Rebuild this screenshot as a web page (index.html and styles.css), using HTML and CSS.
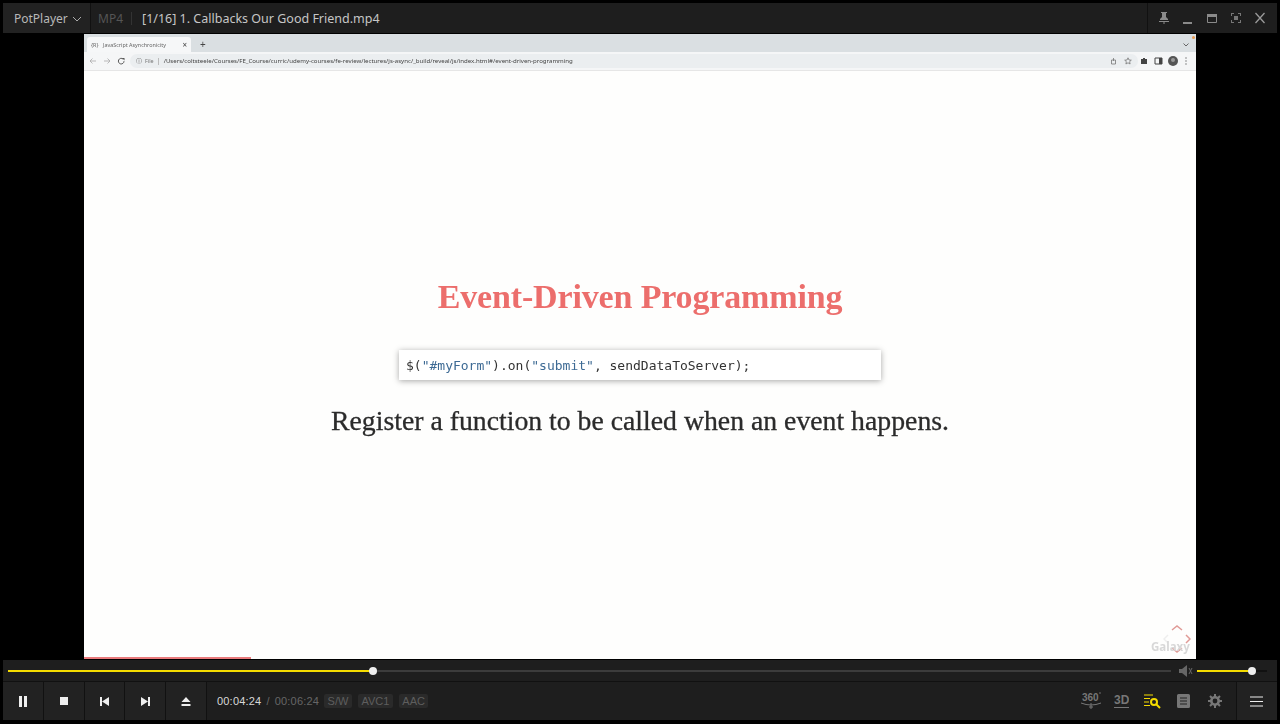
FILE: index.html
```html
<!DOCTYPE html>
<html lang="en">
<head>
    <meta charset="UTF-8">
    <title>PotPlayer</title>
    <link rel="stylesheet" href="styles.css">
</head>
<body>
    <div class="player">
        <div class="titlebar">
            <div class="app-menu">PotPlayer
                <svg class="chevron" width="10" height="6" viewBox="0 0 10 6"><path d="M1 1l4 4 4-4" fill="none" stroke="#aaa" stroke-width="1"/></svg>
            </div>
            <div class="title-info">
                <span class="format">MP4</span>
                <span class="title-sep"></span>
                <span class="filename">[1/16] 1. Callbacks Our Good Friend.mp4</span>
            </div>
            <div class="window-buttons">
                <svg width="12" height="14" viewBox="0 0 12 14"><path d="M3 1h6v1H8v4l2 2v1H2V8l2-2V2H3zM1 10h10v1H1zM5.500 11h1v2h-1z" fill="#8a8a8a"/></svg>
                <svg width="12" height="14" viewBox="0 0 12 14"><path d="M1 11h9v2H1z" fill="#8a8a8a"/></svg>
                <svg width="12" height="14" viewBox="0 0 12 14"><path d="M1.500 3.500h9v8h-9z" fill="none" stroke="#8a8a8a"/><path d="M1 3h10v3H1z" fill="#8a8a8a"/></svg>
                <svg width="12" height="14" viewBox="0 0 12 14"><path d="M1 2h3v1H2v2H1zM8 2h3v3h-1V3H8zM1 9h1v2h2v1H1zM10 9h1v3H8v-1h2zM4 5h4v4H4z" fill="#777"/></svg>
                <svg width="12" height="14" viewBox="0 0 12 14"><path d="M1.500 2l9 10M10.500 2l-9 10" fill="none" stroke="#9a9a9a" stroke-width="1.300"/></svg>
            </div>
        </div>

        <div class="video-area">
            <div class="video">
                <div class="chrome-tabs">
                    <div class="chrome-tab">
                        <span class="favicon">{R}</span>
                        <span class="tab-title">JavaScript Asynchronicity</span>
                        <span class="tab-close">×</span>
                    </div>
                    <span class="tab-new">+</span>
                    <svg class="tab-more" width="6" height="4" viewBox="0 0 6 4"><path d="M0.500 0.500L3 3l2.500-2.500" fill="none" stroke="#666"/></svg>
                    <span class="update-dot"></span>
                </div>
                <div class="chrome-bar">
                    <svg width="39" height="8" viewBox="0 0 39 8"><path d="M1 4h6M1 4l2.500-2.500M1 4l2.500 2.500M15 4h6M21 4l-2.500-2.500M21 4l-2.500 2.500" fill="none" stroke="#aaa" stroke-width="0.800"/><path d="M34 2a2.800 2.800 0 1 0 1 2.200" fill="none" stroke="#555" stroke-width="1"/><path d="M33 1h2.500v2.500z" fill="#555"/></svg>
                    <div class="omnibox">
                        <span class="info-icon">ⓘ</span>
                        <span class="file-label">File</span>
                        <span class="url-sep"></span>
                        <span class="url">/Users/coltsteele/Courses/FE_Course/curric/udemy-courses/fe-review/lectures/js-async/_build/reveal/js/index.html#/event-driven-programming</span>
                        <svg class="omni-icons" width="24" height="8" viewBox="0 0 24 8"><path d="M1.500 3h4v4h-4zM3.500 1v3" fill="none" stroke="#777" stroke-width="0.800"/><path d="M18 0.800l1 2.200 2.300 0.200-1.700 1.500 0.500 2.300-2.100-1.200-2.100 1.200 0.500-2.300-1.700-1.500 2.300-0.200z" fill="none" stroke="#777" stroke-width="0.800"/></svg>
                    </div>
                    <svg width="52" height="10" viewBox="0 0 52 10"><path d="M1 3h2V2h2v1h2v5H1z" fill="#444"/><path d="M15 2h7v6h-7z" fill="none" stroke="#444"/><path d="M19 2h3v6h-3z" fill="#444"/><circle cx="33" cy="5" r="5" fill="#555"/><circle cx="33" cy="4" r="2" fill="#999"/><circle cx="46" cy="2" r="0.700" fill="#666"/><circle cx="46" cy="5" r="0.700" fill="#666"/><circle cx="46" cy="8" r="0.700" fill="#666"/></svg>
                </div>
                <div class="slide">
                    <h1 class="slide-title">Event-Driven Programming</h1>
                    <pre class="code-box">$(<span class="code-str">"#myForm"</span>).on(<span class="code-str">"submit"</span>, sendDataToServer);</pre>
                    <p class="slide-text">Register a function to be called when an event happens.</p>
                    <div class="watermark">
                        <svg width="28" height="28" viewBox="0 0 28 28"><path d="M9 5l5-4 5 4M23 10l4 4-4 4M19 23l-5 4-5-4" fill="none" stroke="#e09a96" stroke-width="1.500"/><path d="M5 10l-4 4 4 4" fill="none" stroke="#eee" stroke-width="1.500"/></svg>
                        <span class="watermark-text">Galaxy</span>
                    </div>
                </div>
                <div class="slide-progress"></div>
            </div>
        </div>

        <div class="seek-row">
            <div class="track seek-track">
                <div class="track-fill seek-fill"></div>
                <span class="knob"></span>
            </div>
            <svg class="speaker" width="14" height="12" viewBox="0 0 14 12"><path d="M0 4h3l5-4v12L3 8H0z" fill="#666"/><path d="M10 3l3 6M13 3l-3 6" stroke="#666" stroke-width="1"/></svg>
            <div class="track volume-track">
                <div class="track-fill volume-fill"></div>
                <span class="knob"></span>
            </div>
        </div>

        <div class="controls">
            <button class="ctl-btn"><svg width="10" height="11" viewBox="0 0 10 11"><path d="M1 0h3v11H1zM6 0h3v11H6z" fill="#eee"/></svg></button>
            <button class="ctl-btn"><svg width="8" height="8" viewBox="0 0 8 8"><path d="M0 0h8v8H0z" fill="#eee"/></svg></button>
            <button class="ctl-btn"><svg width="9" height="9" viewBox="0 0 9 9"><path d="M0 0h2v9H0zM9 0v9L2 4.500z" fill="#eee"/></svg></button>
            <button class="ctl-btn"><svg width="9" height="9" viewBox="0 0 9 9"><path d="M9 0H7v9h2zM0 0v9l7-4.500z" fill="#eee"/></svg></button>
            <button class="ctl-btn"><svg width="10" height="9" viewBox="0 0 10 9"><path d="M5 0l4.500 5H.5zM.5 7h9v2h-9z" fill="#eee"/></svg></button>
            <div class="time">
                <span class="time-now">00:04:24</span>
                <span class="time-sep">/</span>
                <span class="time-total">00:06:24</span>
            </div>
            <div class="badges">
                <span class="badge">S/W</span>
                <span class="badge">AVC1</span>
                <span class="badge">AAC</span>
            </div>
            <div class="tools">
                <span class="tool"><svg width="22" height="20" viewBox="0 0 22 20"><text x="2" y="10" class="icon-label">360</text><circle cx="20" cy="2" r="0.800" fill="#777"/><path d="M1 12q10 4 20 0M11 12v6M9 16h4" fill="none" stroke="#777"/></svg></span>
                <span class="tool"><svg width="15" height="16" viewBox="0 0 15 16"><text x="0" y="11" class="icon-label icon-label-big">3D</text><path d="M0 14.500h15" stroke="#777"/></svg></span>
                <span class="tool"><svg width="17" height="15" viewBox="0 0 17 15"><path d="M0 1h9M0 4.500h6M0 8h5M0 11.500h6" stroke="#f5dc00" stroke-width="1.200"/><circle cx="10" cy="8" r="3" fill="none" stroke="#f5dc00" stroke-width="2"/><path d="M12 10l4 4" stroke="#f5dc00" stroke-width="2"/></svg></span>
                <span class="tool"><svg width="13" height="14" viewBox="0 0 13 14"><path d="M1.500 0h10A1.500 1.500 0 0 1 13 1.500v11a1.500 1.500 0 0 1-1.500 1.500h-10A1.500 1.500 0 0 1 0 12.500v-11A1.500 1.500 0 0 1 1.500 0z" fill="#777"/><path d="M3 4h7M3 7h7M3 10h7" stroke="#222"/></svg></span>
                <span class="tool"><svg width="14" height="14" viewBox="0 0 14 14"><circle cx="7" cy="7" r="3.700" fill="none" stroke="#777" stroke-width="2.600"/><path d="M7 0v3M7 11v3M0 7h3M11 7h3M2 2l2 2M10 10l2 2M12 2l-2 2M4 10l-2 2" stroke="#777" stroke-width="2"/></svg></span>
            </div>
            <button class="ctl-btn menu-btn"><svg width="13" height="11" viewBox="0 0 13 11"><path d="M0 1h13M0 5.500h13M0 10h13" stroke="#eee" stroke-width="1.200"/></svg></button>
        </div>
    </div>
</body>
</html>
```

FILE: styles.css
```css
* {
    box-sizing: border-box;
}
body {
    margin: 0;
    background-color: #000;
    font-family: "Noto Sans", Arial, sans-serif;
}
.player {
    display: flex;
    flex-direction: column;
    height: 724px;
    padding: 3px 3px 4px;
    overflow: hidden;
}

/* title bar */
.titlebar {
    display: flex;
    align-items: center;
    height: 30px;
    background-color: #1e1e1e;
    flex-shrink: 0;
}
.app-menu {
    display: flex;
    align-items: center;
    gap: 4px;
    width: 88px;
    height: 100%;
    padding-left: 11px;
    background-color: #222;
    border-right: 1px solid #111;
    color: #b8b8b8;
    font-size: 12px;
}
.chevron {
    margin-top: 1px;
}
.title-info {
    display: flex;
    align-items: center;
    flex: 1;
    padding-left: 7px;
}
.format {
    color: #555;
    font-size: 12px;
}
.title-sep {
    width: 1px;
    height: 13px;
    margin: 0 10px 0 8px;
    background-color: #333;
}
.filename {
    color: #c6c6c6;
    font-size: 12.5px;
}
.window-buttons {
    display: flex;
    align-items: center;
    gap: 12px;
    width: 130px;
    height: 100%;
    padding-left: 10px;
    border-left: 1px solid #111;
}

/* video */
.video-area {
    display: flex;
    justify-content: center;
    flex: 1;
    min-height: 0;
    padding-top: 1px;
}
.video {
    position: relative;
    display: flex;
    flex-direction: column;
    width: 1112px;
    background-color: #fefefd;
}
.chrome-tabs {
    position: relative;
    display: flex;
    align-items: flex-end;
    height: 18px;
    padding-left: 3px;
    background-color: #dadfe2;
    flex-shrink: 0;
    filter: blur(0.4px);
}
.chrome-tab {
    display: flex;
    align-items: center;
    width: 104px;
    height: 15px;
    padding: 0 4px;
    background-color: #f6f7f8;
    border-radius: 3px 3px 0 0;
    font-size: 5.4px;
    color: #666;
}
.favicon {
    width: 12px;
}
.tab-title {
    flex: 1;
    white-space: nowrap;
}
.tab-close {
    font-size: 8px;
    color: #444;
}
.tab-new {
    margin: 0 0 1px 9px;
    font-size: 10px;
    line-height: 13px;
    color: #444;
}
.tab-more {
    position: absolute;
    right: 7px;
    top: 9px;
}
.update-dot {
    position: absolute;
    right: 1px;
    top: 2px;
    width: 3px;
    height: 3px;
    background-color: #e99a50;
    border-radius: 50%;
}
.chrome-bar {
    display: flex;
    align-items: center;
    gap: 2px;
    height: 19px;
    padding: 0 4px 0 5px;
    background-color: #f5f6f7;
    border-bottom: 1px solid #e6e6e6;
    flex-shrink: 0;
    filter: blur(0.4px);
}
.omnibox {
    display: flex;
    align-items: center;
    flex: 1;
    height: 14px;
    padding: 0 4px 0 6px;
    background-color: #ebeef0;
    border-radius: 7px;
    font-size: 5.4px;
    color: #555;
}
.info-icon {
    width: 9px;
    font-size: 6px;
}
.file-label {
    color: #777;
}
.url-sep {
    width: 1px;
    height: 7px;
    margin: 0 5px 0 4px;
    background-color: #bbb;
}
.url {
    flex: 1;
    white-space: nowrap;
    font-size: 6.08px;
    color: #444;
}

/* slide */
.slide {
    position: relative;
    display: flex;
    flex-direction: column;
    align-items: center;
    flex: 1;
    min-height: 0;
    filter: blur(0.3px);
}
.slide-title {
    margin: 204px 0 0;
    font-family: "Liberation Serif", serif;
    font-size: 34px;
    line-height: 44px;
    font-weight: bold;
    letter-spacing: -0.15px;
    color: #ec6e6c;
}
.code-box {
    width: 482px;
    height: 30px;
    margin: 31px 0 0;
    padding: 0 7px;
    background-color: #fff;
    box-shadow: 0 1px 6px rgba(0, 0, 0, 0.35);
    font-family: "DejaVu Sans Mono", monospace;
    font-size: 13px;
    line-height: 32px;
    color: #333;
}
.code-str {
    color: #3d6a94;
}
.slide-text {
    margin: 23px 0 0;
    font-family: "Liberation Serif", serif;
    font-size: 27.75px;
    line-height: 36px;
    color: #2b2b2b;
    -webkit-text-stroke: 0.3px #2b2b2b;
}
.watermark {
    position: absolute;
    right: 5px;
    bottom: 4px;
    width: 40px;
    height: 30px;
}
.watermark svg {
    position: absolute;
    right: 0;
    top: 0;
}
.watermark-text {
    position: absolute;
    left: 0;
    bottom: 1px;
    font-size: 11.5px;
    font-weight: bold;
    color: #d8d8d8;
}
.slide-progress {
    position: absolute;
    left: 0;
    bottom: 0;
    width: 167px;
    height: 2px;
    background-color: #ea7a7c;
}

/* seek row */
.seek-row {
    display: flex;
    align-items: center;
    height: 22px;
    padding: 0 10px 0 5px;
    margin-top: 1px;
    background-color: #1e1e1e;
    border-bottom: 1px solid #111;
    flex-shrink: 0;
}
.track {
    position: relative;
    height: 2px;
    background-color: #3c3c3c;
}
.track-fill {
    height: 100%;
    background-color: #f5dc00;
}
.knob {
    position: absolute;
    top: -3px;
    width: 8px;
    height: 8px;
    margin-left: -4px;
    background-color: #eee;
    border-radius: 50%;
}
.seek-track {
    flex: 1;
}
.seek-fill {
    width: 365px;
}
.seek-track .knob {
    left: 365px;
}
.speaker {
    margin: 0 4px 0 8px;
}
.volume-track {
    width: 70px;
    background-color: #111;
}
.volume-fill {
    width: 55px;
}
.volume-track .knob {
    left: 55px;
}

/* bottom controls */
.controls {
    display: flex;
    align-items: center;
    height: 38px;
    background-color: #1e1e1e;
    flex-shrink: 0;
}
.ctl-btn {
    display: flex;
    align-items: center;
    justify-content: center;
    width: 40.8px;
    height: 100%;
    padding: 0;
    background-color: #222;
    border: none;
    border-right: 1px solid #111;
}
.time {
    display: flex;
    gap: 5px;
    margin-left: 10px;
    font-family: "Liberation Sans", Arial, sans-serif;
    font-size: 11px;
    letter-spacing: 0.2px;
}
.time-now {
    color: #d8d8d8;
}
.time-sep,
.time-total {
    color: #666;
}
.badges {
    display: flex;
    gap: 6px;
    margin-left: 5px;
    flex: 1;
}
.badge {
    padding: 1px 3.5px;
    background-color: #2a2a2a;
    border-radius: 2px;
    font-family: "Liberation Sans", Arial, sans-serif;
    font-size: 11px;
    color: #5e5e5e;
}
.tools {
    display: flex;
    align-items: center;
    margin-right: 6px;
}
.tool {
    display: flex;
    align-items: center;
    justify-content: center;
    width: 31px;
}
.icon-label {
    font-family: "Liberation Sans", Arial, sans-serif;
    font-size: 10px;
    font-weight: bold;
    fill: #777;
}
.icon-label-big {
    font-size: 12px;
}
.menu-btn {
    width: 41px;
    padding-right: 1px;
    border-right: none;
    border-left: 1px solid #111;
}
```
